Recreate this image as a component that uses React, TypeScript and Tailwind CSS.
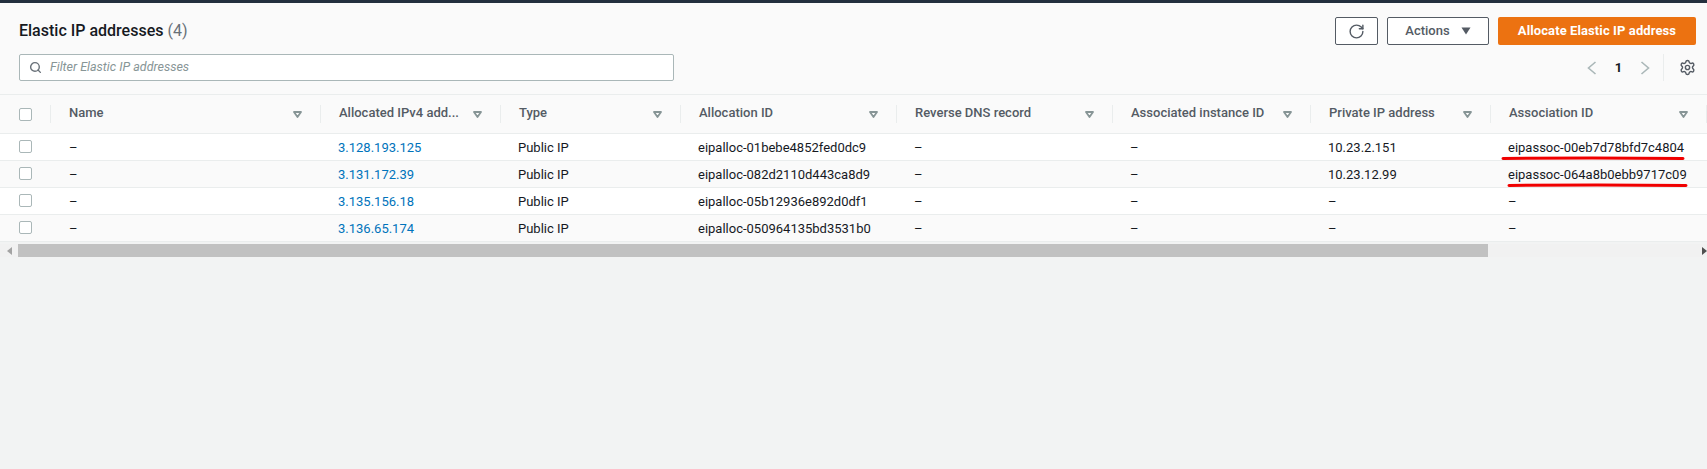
import React from 'react';
import { RotateCw, Search, Settings } from 'lucide-react';

const gridCols = 'grid grid-cols-[51px_270px_180px_180px_216px_216px_198px_180px_216px]';

const columns = [
  'Name',
  'Allocated IPv4 add...',
  'Type',
  'Allocation ID',
  'Reverse DNS record',
  'Associated instance ID',
  'Private IP address',
  'Association ID',
];

const rows = [
  { ip: '3.128.193.125', alloc: 'eipalloc-01bebe4852fed0dc9', priv: '10.23.2.151', assoc: 'eipassoc-00eb7d78bfd7c4804' },
  { ip: '3.131.172.39', alloc: 'eipalloc-082d2110d443ca8d9', priv: '10.23.12.99', assoc: 'eipassoc-064a8b0ebb9717c09' },
  { ip: '3.135.156.18', alloc: 'eipalloc-05b12936e892d0df1', priv: '–', assoc: '–' },
  { ip: '3.136.65.174', alloc: 'eipalloc-050964135bd3531b0', priv: '–', assoc: '–' },
];

const Checkbox = ({ className = '' }: { className?: string }) => (
  <div className={`ml-[19px] w-[13px] h-[13px] rounded-[2px] border border-[#aab7b8] bg-white ${className}`} />
);

const SortIcon = () => (
  <svg width="9" height="7" viewBox="0 0 9 7" className="shrink-0">
    <path d="M1 1h7L4.5 6z" fill="none" stroke="#879596" strokeWidth="1.8" strokeLinejoin="round" />
  </svg>
);

const Cell = ({ children, className = '' }: { children: React.ReactNode; className?: string }) => (
  <div className={`relative flex items-center pl-[17px] pt-[2px] whitespace-nowrap ${className}`}>{children}</div>
);

const App = () => {
  return (
    <div className="h-[469px] overflow-hidden flex flex-col bg-[#f2f3f3] text-[13px] text-[#16191f] font-['Roboto',sans-serif]">
      <div className="h-[3px] bg-[#232f3e]" />

      <div className="h-[91px] bg-[#fafafa] pl-[19px] pr-[11px]">
        <div className="flex items-center justify-between pt-[14px]">
          <h1 className="text-[16px] font-medium leading-[28px]">
            Elastic IP addresses <span className="font-normal text-[#687078]">(4)</span>
          </h1>
          <div className="flex gap-[9px]">
            <button className="w-[43px] h-[28px] flex items-center justify-center bg-white border border-[#545b64] rounded-[2px]">
              <RotateCw size={17} strokeWidth={2} className="text-[#545b64]" />
            </button>
            <button className="w-[102px] h-[28px] flex items-center justify-center gap-[11px] bg-white border border-[#545b64] rounded-[2px] font-medium text-[#545b64]">
              Actions
              <svg width="10" height="8" viewBox="0 0 10 8">
                <path d="M0.5 0.5h9L5 7.5z" fill="#545b64" />
              </svg>
            </button>
            <button className="w-[198px] h-[28px] bg-[#ec7211] rounded-[2px] font-bold tracking-[0.1px] text-white">
              Allocate Elastic IP address
            </button>
          </div>
        </div>

        <div className="flex items-center justify-between mt-[9px]">
          <div className="w-[655px] h-[27px] flex items-center gap-[8px] pl-[9px] bg-white border border-[#aab7b8] rounded-[2px]">
            <Search size={13} strokeWidth={2.6} className="text-[#687078]" />
            <span className="italic text-[12.5px] text-[#879596]">Filter Elastic IP addresses</span>
          </div>
          <div className="flex items-center h-[27px]">
            <svg width="10" height="14" viewBox="0 0 10 14" className="shrink-0">
              <path d="M8.5 1L1.5 7l7 6" fill="none" stroke="#aab7b8" strokeWidth="1.6" />
            </svg>
            <span className="w-[43px] text-center font-bold">1</span>
            <svg width="10" height="14" viewBox="0 0 10 14" className="shrink-0">
              <path d="M1.5 1l7 6-7 6" fill="none" stroke="#aab7b8" strokeWidth="1.6" />
            </svg>
            <div className="ml-[13px] mr-[15px] w-px h-[27px] bg-[#eaeded]" />
            <Settings size={17} strokeWidth={2} className="text-[#545b64]" />
          </div>
        </div>
      </div>

      <div className={`${gridCols} h-[40px] py-[10px] bg-[#fafafa] border-y border-[#eaeded]`}>
        <div className="flex items-center border-r border-[#eaeded]">
          <Checkbox />
        </div>
        {columns.map((col) => (
          <div key={col} className="flex items-center justify-between pl-[18px] pr-[18px] border-r border-[#eaeded] font-medium text-[#545b64] whitespace-nowrap">
            <span className="leading-[16px] mb-[2px]">{col}</span>
            <SortIcon />
          </div>
        ))}
      </div>

      {rows.map((row, i) => (
        <div key={row.ip} className={`${gridCols} h-[27px] border-b border-[#eaeded] ${i % 2 === 0 ? 'bg-white' : 'bg-[#fafafa]'}`}>
          <div className="flex items-center">
            <Checkbox className="mb-[1px]" />
          </div>
          <Cell className="pl-[18px]">–</Cell>
          <Cell className="text-[#0073bb]">{row.ip}</Cell>
          <Cell>Public IP</Cell>
          <Cell>{row.alloc}</Cell>
          <Cell>–</Cell>
          <Cell>–</Cell>
          <Cell>{row.priv}</Cell>
          <Cell>
            {row.assoc}
            {i < 2 && (
              <svg width="190" height="5" viewBox="0 0 190 5" className={`absolute top-[22px] ${i === 0 ? 'left-[10px]' : 'left-[16px]'}`}>
                <path d={i === 0 ? 'M2 2.5Q90 1.5 182 2.5' : 'M2 2.5Q90 1.5 179 2.5'} fill="none" stroke="#f00000" strokeWidth="3" strokeLinecap="round" />
              </svg>
            )}
          </Cell>
        </div>
      ))}

      <div className="h-[13px] mt-[2px] flex items-center bg-[#f1f1f1]">
        <div className="w-[18px] flex justify-center">
          <svg width="5" height="8" viewBox="0 0 5 8">
            <path d="M5 0v8L0 4z" fill="#a3a3a3" />
          </svg>
        </div>
        <div className="w-[1470px] h-[13px] bg-[#c1c1c1]" />
        <div className="flex-1 flex justify-end">
          <svg width="5" height="8" viewBox="0 0 5 8">
            <path d="M0 0v8L5 4z" fill="#505050" />
          </svg>
        </div>
      </div>
    </div>
  );
};

export default App;
